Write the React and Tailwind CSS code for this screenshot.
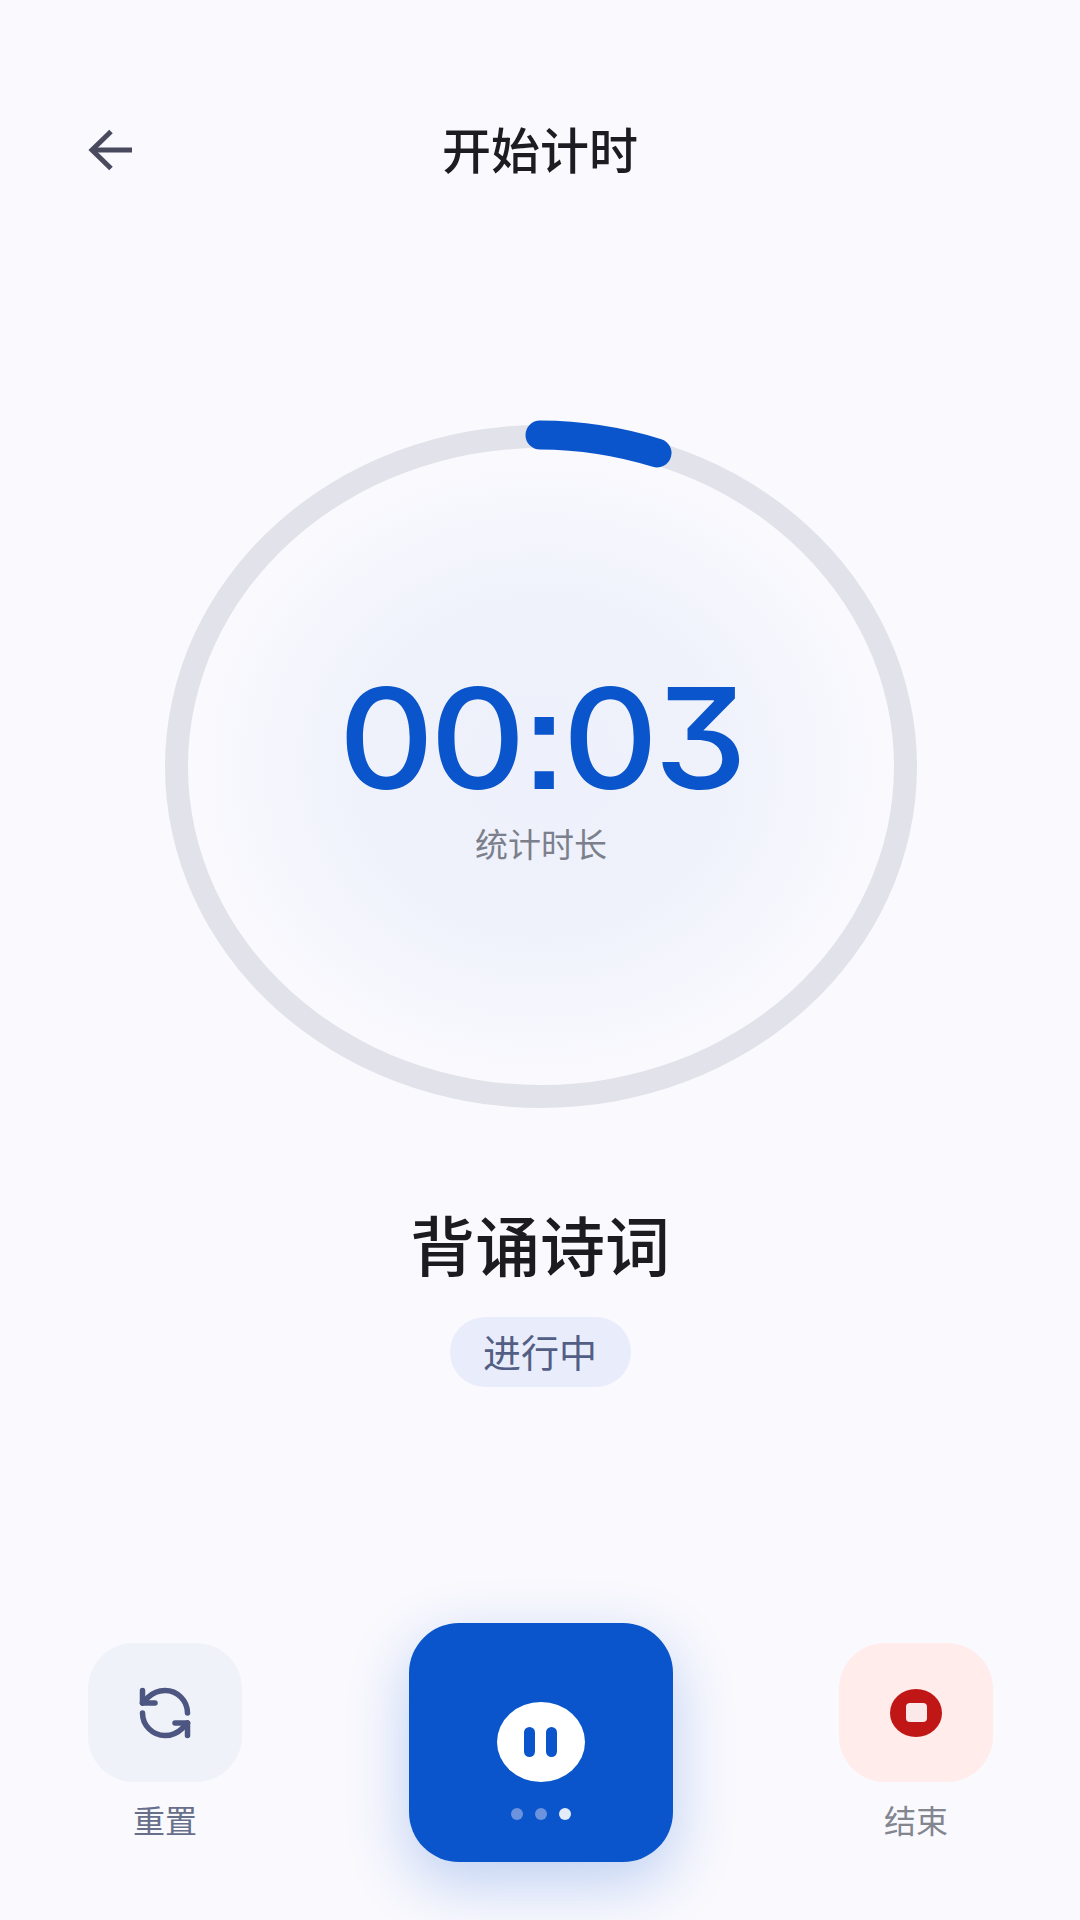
import { RefreshCcw } from "lucide-react";

const cjk = "font-['Noto_Sans','Noto_Sans_CJK_SC',sans-serif]";

function SideButton({ label, labelColor, bg, children }) {
  return (
    <div className="mt-[20px] flex flex-col items-center">
      <div className={`flex h-[139px] w-[154px] items-center justify-center rounded-[46px] ${bg}`}>
        {children}
      </div>
      <span className={`mt-[19px] text-[32px] leading-[40px] ${labelColor}`}>{label}</span>
    </div>
  );
}

export default function App() {
  return (
    <div className={`flex h-[1920px] w-[1080px] flex-col items-center overflow-hidden bg-[#f9f9fe] ${cjk}`}>
      <header className="mt-[120px] grid h-[60px] w-full grid-cols-[1fr_auto_1fr] items-center px-[88px]">
        <svg width="44" height="42" viewBox="0 0 44 42" fill="none" stroke="#4a4a5e" strokeWidth="5">
          <path d="M44 21H4" />
          <path d="M23 2.5 4 21l19 18.5" />
        </svg>
        <h1 className="text-[49px] leading-[60px] font-medium text-[#1c1c22]">开始计时</h1>
        <div />
      </header>

      {/* ring */}
      <div className="relative mt-[245px] ml-[2px] flex h-[683px] w-[752px] flex-col items-center rounded-[50%] border-[23px] border-[#e2e2ea] bg-[radial-gradient(closest-side,#eef1fb_0%,#eff2fb_50%,#f9f9fe_95%)] pt-[217px]">
        <svg className="absolute top-[-23px] left-[-23px] overflow-visible" width="752" height="683" viewBox="0 0 752 683" fill="none">
          <path d="M375 10A364.5 330 0 0 1 492 28" stroke="#0a55cb" strokeWidth="29" strokeLinecap="round" />
        </svg>
        <div className="origin-center scale-x-[1.06] font-['Inter',sans-serif] text-[140px] leading-[147px] font-medium tracking-[-4px] text-[#0a55cb] [font-feature-settings:'cv09','ss07']">
          00:03
        </div>
        <div className="mt-[11px] text-[33px] leading-[44px] text-[#7c7f8c]">统计时长</div>
      </div>

      <h2 className="mt-[98px] text-[65px] leading-[80px] font-medium text-[#1b1b20]">背诵诗词</h2>
      <div className="mt-[31px] flex h-[70px] w-[181px] items-center justify-center rounded-full bg-[#e9edfb] text-[38px] text-[#535e85]">
        进行中
      </div>

      {/* controls */}
      <div className="mt-auto mb-[58px] flex w-full items-start justify-between pr-[87px] pl-[88px]">
        <SideButton label="重置" labelColor="text-[#676f8a]" bg="bg-[#f0f2f9]">
          <RefreshCcw size={60} strokeWidth={2.2} color="#4c5680" />
        </SideButton>

        <div className="flex h-[239px] w-[264px] flex-col items-center rounded-[50px] bg-[#0a55cb] pt-[79px] shadow-[0_20px_60px_rgba(10,85,203,0.25)]">
          <div className="flex h-[80px] w-[88px] items-center justify-center gap-[11px] rounded-[50%] bg-white">
            <span className="h-[30px] w-[11px] rounded-full bg-[#0a55cb]" />
            <span className="h-[30px] w-[11px] rounded-full bg-[#0a55cb]" />
          </div>
          <div className="mt-[26px] flex gap-[12px]">
            <span className="size-[12px] rounded-full bg-[#6b93de]" />
            <span className="size-[12px] rounded-full bg-[#6b93de]" />
            <span className="size-[12px] rounded-full bg-[#e4ebf9]" />
          </div>
        </div>

        <SideButton label="结束" labelColor="text-[#83858f]" bg="bg-[#ffeceb]">
          <div className="flex h-[48px] w-[52px] items-center justify-center rounded-[50%] bg-[#c01616]">
            <span className="h-[19px] w-[21px] rounded-[4px] bg-[#fbe9e9]" />
          </div>
        </SideButton>
      </div>
    </div>
  );
}
